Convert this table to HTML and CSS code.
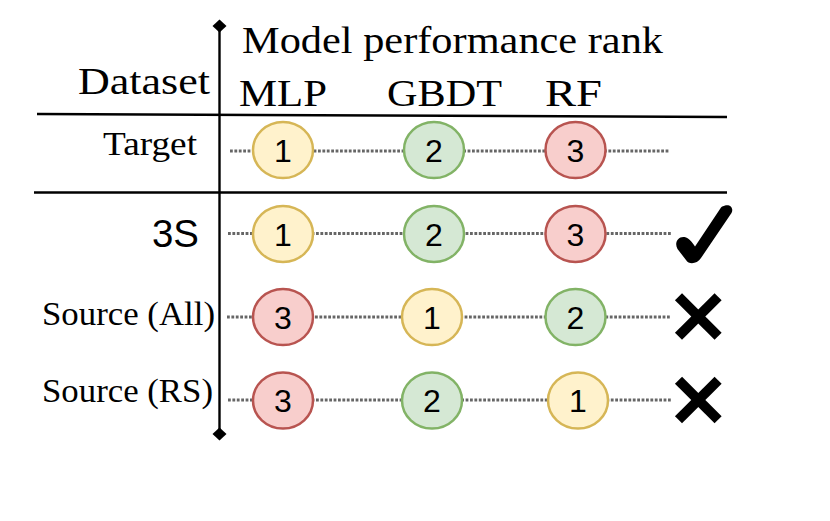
FILE: index.html
```html
<!DOCTYPE html>
<html lang="en">
<head>
<meta charset="utf-8">
<title>Model performance rank</title>
<link rel="stylesheet" href="styles.css">
</head>
<body>
<div class="figure">
<svg class="diagram" width="830" height="521" viewBox="0 0 830 521" xmlns="http://www.w3.org/2000/svg">
  <!-- header texts -->
  <text class="serif head" x="242" y="53" textLength="421" lengthAdjust="spacingAndGlyphs">Model performance rank</text>
  <text class="serif head" x="78" y="94" textLength="132" lengthAdjust="spacingAndGlyphs">Dataset</text>
  <text class="serif head" x="239" y="106" textLength="88" lengthAdjust="spacingAndGlyphs">MLP</text>
  <text class="serif head" x="387" y="106" textLength="115" lengthAdjust="spacingAndGlyphs">GBDT</text>
  <text class="serif head" x="545" y="106" textLength="57" lengthAdjust="spacingAndGlyphs">RF</text>

  <!-- rules -->
  <line class="rule" x1="37" y1="114" x2="727" y2="117"/>
  <line class="rule" x1="34" y1="192.5" x2="727" y2="192.5"/>

  <!-- vertical axis -->
  <line class="axis" x1="219.5" y1="26" x2="219.5" y2="434"/>
  <polygon class="tip" points="219.5,19.5 226.5,26 219.5,32.5 212.5,26"/>
  <polygon class="tip" points="219.5,427.5 226.5,434 219.5,440.5 212.5,434"/>

  <!-- row labels -->
  <text class="serif row-label" x="103" y="155" textLength="94" lengthAdjust="spacingAndGlyphs">Target</text>
  <text class="sans big" x="152" y="247" textLength="47" lengthAdjust="spacingAndGlyphs">3S</text>
  <text class="serif row-label" x="42" y="325" textLength="173" lengthAdjust="spacingAndGlyphs">Source (All)</text>
  <text class="serif row-label" x="42" y="402" textLength="171" lengthAdjust="spacingAndGlyphs">Source (RS)</text>

  <!-- dotted connectors -->
  <line class="dots" x1="230" y1="151" x2="670" y2="151"/>
  <line class="dots" x1="228" y1="233.5" x2="672" y2="233.5"/>
  <line class="dots" x1="227" y1="317" x2="670" y2="317"/>
  <line class="dots" x1="228" y1="400" x2="672" y2="400"/>

  <!-- Target row -->
  <g class="node yellow"><ellipse cx="283" cy="150" rx="30" ry="28"/><text x="283" y="161.5">1</text></g>
  <g class="node green"><ellipse cx="434" cy="150" rx="30" ry="28"/><text x="434" y="161.5">2</text></g>
  <g class="node red"><ellipse cx="575.5" cy="150" rx="30" ry="28"/><text x="575.5" y="161.5">3</text></g>

  <!-- 3S row -->
  <g class="node yellow"><ellipse cx="283" cy="234" rx="30" ry="28"/><text x="283" y="245.5">1</text></g>
  <g class="node green"><ellipse cx="434" cy="234" rx="30" ry="28"/><text x="434" y="245.5">2</text></g>
  <g class="node red"><ellipse cx="575.5" cy="234" rx="30" ry="28"/><text x="575.5" y="245.5">3</text></g>

  <!-- Source (All) row -->
  <g class="node red"><ellipse cx="283" cy="317" rx="30" ry="28"/><text x="283" y="328.5">3</text></g>
  <g class="node yellow"><ellipse cx="432" cy="317" rx="30" ry="28"/><text x="432" y="328.5">1</text></g>
  <g class="node green"><ellipse cx="575.5" cy="317" rx="30" ry="28"/><text x="575.5" y="328.5">2</text></g>

  <!-- Source (RS) row -->
  <g class="node red"><ellipse cx="283" cy="400.5" rx="30" ry="28"/><text x="283" y="412">3</text></g>
  <g class="node green"><ellipse cx="432" cy="400.5" rx="30" ry="28"/><text x="432" y="412">2</text></g>
  <g class="node yellow"><ellipse cx="578" cy="400.5" rx="30" ry="28"/><text x="578" y="412">1</text></g>

  <!-- check mark -->
  <path class="mark" d="M725 205.5 C730 204 734 208 731.5 213 L701 258 C697 264 689 265 686 260 L677.5 249 C674 243 678 236 684.5 237 C689 238 692 242 695 246.5 L721 207.5 C722 206.5 723.5 206 725 205.5 Z"/>

  <!-- crosses -->
  <g class="cross">
    <line x1="678.5" y1="296.7" x2="718.1" y2="336.3"/>
    <line x1="718.1" y1="296.7" x2="678.5" y2="336.3"/>
  </g>
  <g class="cross">
    <line x1="678.5" y1="380.2" x2="718.1" y2="419.8"/>
    <line x1="718.1" y1="380.2" x2="678.5" y2="419.8"/>
  </g>
</svg>
</div>
</body>
</html>
```

FILE: styles.css
```css
html, body {
  margin: 0;
  padding: 0;
  background: #ffffff;
}

.figure {
  width: 830px;
  height: 521px;
}

.diagram {
  display: block;
}

.serif {
  font-family: "Liberation Serif", "Times New Roman", serif;
  fill: #000;
}

.head {
  font-size: 38px;
}

.row-label {
  font-size: 33px;
}

.sans {
  font-family: "Liberation Sans", Arial, sans-serif;
  fill: #000;
}

.big {
  font-size: 39px;
}

.rule {
  stroke: #000;
  stroke-width: 2.6;
}

.axis {
  stroke: #000;
  stroke-width: 2.4;
}

.tip {
  fill: #000;
}

.dots {
  stroke: #666666;
  stroke-width: 2.8;
  stroke-dasharray: 2.8 1.6;
}

.node ellipse {
  stroke-width: 2.5;
}

.node text {
  font-family: "Liberation Sans", Arial, sans-serif;
  font-size: 32px;
  text-anchor: middle;
  fill: #000;
}

.yellow ellipse {
  fill: #fff2cc;
  stroke: #d6b656;
}

.green ellipse {
  fill: #d5e8d4;
  stroke: #82b366;
}

.red ellipse {
  fill: #f8cecc;
  stroke: #b85450;
}

.mark {
  fill: #000;
}

.cross line {
  stroke: #000;
  stroke-width: 10;
  stroke-linecap: butt;
}
```
